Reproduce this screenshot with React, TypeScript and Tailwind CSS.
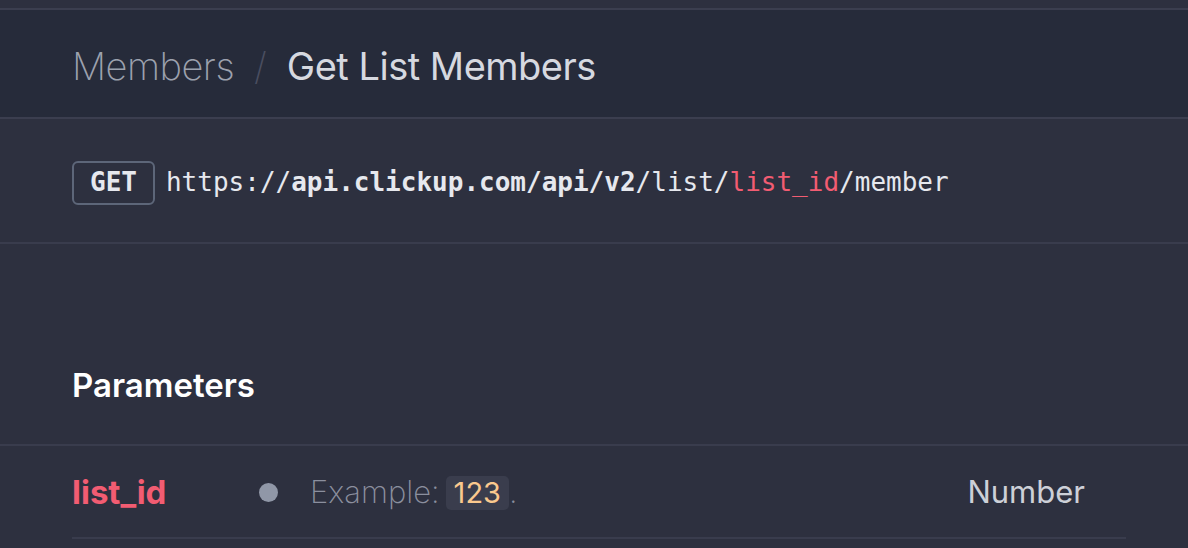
export default function App() {
  return (
    <div className="w-[1188px] h-[548px] overflow-hidden bg-[#2d303f] font-['Inter',sans-serif]">
      <div className="h-[8px] bg-[#2d303f] border-b-2 border-[#3b3e4f] box-content" />
      <header className="h-[101px] pt-[6px] flex items-center px-[72px] bg-[#262b3a] border-b-2 border-[#3b3e4f] box-content">
        <span className="text-[38px] font-extralight text-[#9ca1ae] tracking-[-0.5px]">Members</span>
        <span className="text-[38px] font-extralight text-[#4a4e60] mx-[20px]">/</span>
        <span className="text-[38px] font-normal text-[#d6d9e0] tracking-[-0.5px]">Get List Members</span>
      </header>
      <section className="h-[119px] pt-[4px] flex items-center px-[72px] border-b-2 border-[#393c4d] box-content font-['DejaVu_Sans_Mono',monospace] text-[26px] text-[#e6e8ee]">
        <span className="h-[44px] px-[16px] flex items-center border-2 border-[#5d6679] rounded-[6px] font-bold">GET</span>
        <span className="ml-[11px]">
          https://<b>api.clickup.com/api/v2</b>/list/<span className="text-[#f25c72]">list_id</span>/member
        </span>
      </section>
      <div className="h-[202px] flex flex-col justify-end">
        <h2 className="px-[72px] pb-[39px] text-[33px] leading-[40px] font-semibold text-white">Parameters</h2>
        <div className="h-[2px] bg-[#393c4d]" />
      </div>
      <div className="mx-[72px] w-[1054px] h-[89px] pt-[2px] flex items-center border-b-2 border-[#393c4d] box-content">
        <span className="w-[187px] text-[33px] font-bold text-[#f25c72]">list_id</span>
        <span className="w-[19px] h-[19px] rounded-full bg-[#9097a7]" />
        <span className="ml-[32px] text-[31px] font-extralight text-[#8b8f9e]">Example:</span>
        <span className="ml-[6px] px-[8px] h-[34px] flex items-center rounded-[5px] bg-[#3a3d4d] text-[29px] text-[#fbc98e]">123</span>
        <span className="text-[31px] font-extralight text-[#8b8f9e]">.</span>
        <span className="ml-auto mr-[41px] text-[31px] text-[#cdd0d8]">Number</span>
      </div>
    </div>
  );
}
